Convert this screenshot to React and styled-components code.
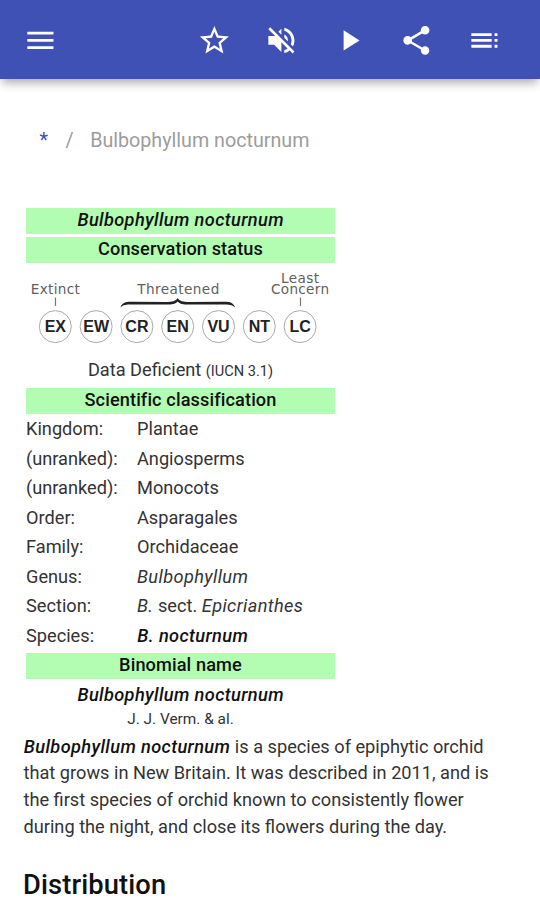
import React from "react"
import styled, { createGlobalStyle } from "styled-components"
import { MdMenu, MdStarBorder, MdVolumeOff, MdPlayArrow, MdShare, MdToc } from "react-icons/md"

const ranks = [
    { label: "Kingdom:", value: "Plantae" },
    { label: "(unranked):", value: "Angiosperms" },
    { label: "(unranked):", value: "Monocots" },
    { label: "Order:", value: "Asparagales" },
    { label: "Family:", value: "Orchidaceae" },
    { label: "Genus:", value: <i>Bulbophyllum</i> },
    { label: "Section:", value: <><i>B.</i> sect. <i>Epicrianthes</i></> },
]

const statuses = ["EX", "EW", "CR", "EN", "VU", "NT", "LC"]

const StatusChart = () => (
    <Chart viewBox="26 267 309 88">
        <ChartLabel x="55.3" y="293.6" textLength="49">Extinct</ChartLabel>
        <ChartLabel x="178.3" y="293.6" textLength="82">Threatened</ChartLabel>
        <ChartLabel x="300" y="283.2" textLength="38">Least</ChartLabel>
        <ChartLabel x="300" y="293.6" textLength="58">Concern</ChartLabel>
        <path d="M55.5 297.5v8.5M300.5 297.5v8.5" stroke="#777" strokeWidth="1.2" />
        <path
            d="M120.5 307.4C122 302.6 126 301.6 132 301.8L166 302C172 302 176 301 177.7 298C179.5 301 183 302 189 302L223 301.8C230 301.6 233.5 302.6 235 307.4C232 304.8 229 304.6 223 304.6L189 304.6C183 304.6 179.5 303.6 177.7 301.4C176 303.6 172 304.6 166 304.6L132 304.6C126 304.6 123.5 304.8 120.5 307.4Z"
            fill="#222"
        />
        {statuses.map((code, i) => (
            <g key={code}>
                <circle cx={55.3 + i * 40.8} cy="326.6" r="16" fill="#fff" stroke="#aaa" strokeWidth="1" />
                <Code x={55.3 + i * 40.8} y="332.3">{code}</Code>
            </g>
        ))}
    </Chart>
)

const App = () => {
    return (
        <Page>
            <GlobalStyle />
            <Toolbar>
                <IconButton aria-label="Menu"><MdMenu /></IconButton>
                <Actions>
                    <IconButton aria-label="Bookmark"><MdStarBorder /></IconButton>
                    <IconButton aria-label="Mute"><MdVolumeOff /></IconButton>
                    <IconButton aria-label="Play"><MdPlayArrow /></IconButton>
                    <IconButton aria-label="Share"><MdShare /></IconButton>
                    <IconButton aria-label="Contents"><MdToc /></IconButton>
                </Actions>
            </Toolbar>
            <Breadcrumb>
                <Home href="#">*</Home>
                <span>/</span>
                <Current>Bulbophyllum nocturnum</Current>
            </Breadcrumb>
            <Infobox>
                <Band><BoldItalic>Bulbophyllum nocturnum</BoldItalic></Band>
                <Band>Conservation status</Band>
                <Status>
                    <StatusChart />
                    <StatusText>Data Deficient <small>(IUCN 3.1)</small></StatusText>
                </Status>
                <Band>Scientific classification</Band>
                {ranks.map((rank, i) => (
                    <Rank key={i}>
                        <span>{rank.label}</span>
                        <span>{rank.value}</span>
                    </Rank>
                ))}
                <Rank>
                    <span>Species:</span>
                    <BoldItalic>B. nocturnum</BoldItalic>
                </Rank>
                <Band>Binomial name</Band>
                <Binomial>
                    <BoldItalic>Bulbophyllum nocturnum</BoldItalic>
                    <Authority>J. J. Verm. &amp; al.</Authority>
                </Binomial>
            </Infobox>
            <Copy>
                <BoldItalic>Bulbophyllum nocturnum</BoldItalic> is a species of epiphytic orchid<br />
                that grows in New Britain. It was described in 2011, and is<br />
                the first species of orchid known to consistently flower<br />
                during the night, and close its flowers during the day.
            </Copy>
            <Heading>Distribution</Heading>
        </Page>
    )
}

const GlobalStyle = createGlobalStyle`
    * {
      box-sizing: border-box;
    }
    body {
      margin: 0;
      background: #fff;
      overflow: hidden;
    }
`

const Page = styled.div`
    height: 900px;
    overflow: hidden;
    font-family: Roboto, sans-serif;
    font-size: 18.2px;
    color: #333;
`

const Toolbar = styled.header`
    display: flex;
    justify-content: space-between;
    align-items: center;
    height: 79px;
    padding: 1px 38.5px 0 22.5px;
    background: #3f51b5;
    box-shadow: 0 6px 9px -2px rgba(0, 0, 0, 0.32);
`

const Actions = styled.div`
    display: flex;
    gap: 32.7px;
`

const IconButton = styled.button`
    display: flex;
    padding: 0;
    border: 0;
    background: none;
    color: #fff;
    font-size: 34.8px;
`

const Breadcrumb = styled.nav`
    display: flex;
    height: 24px;
    margin: 50px 0 0 39.5px;
    font-size: 19.7px;
    line-height: 24px;
    color: #9c9c9c;
`

const Home = styled.a`
    width: 26px;
    color: #3f51b5;
    text-decoration: none;
`

const Current = styled.span`
    margin-left: 16.5px;
`

const Infobox = styled.section`
    display: flex;
    flex-direction: column;
    gap: 3.5px;
    width: 309px;
    margin: 54.8px 0 0 26px;
    line-height: 23.5px;
    i {
      letter-spacing: 0.38px;
    }
`

const Band = styled.div`
    height: 26px;
    background: #b3fdb3;
    color: #111;
    font-weight: 500;
    letter-spacing: 0.1px;
    text-align: center;
`

const BoldItalic = styled.b`
    padding-left: 0.3px;
    font-weight: 500;
    font-style: italic;
    letter-spacing: 0.37px;
    color: #111;
`

const Status = styled.div`
    height: 117.5px;
`

const Chart = styled.svg`
    display: block;
    width: 309px;
    height: 88px;
`

const ChartLabel = styled.text`
    font-family: "DejaVu Sans", sans-serif;
    font-size: 13.6px;
    text-anchor: middle;
    fill: #606060;
`

const Code = styled.text`
    font-family: "Liberation Sans", Arial, sans-serif;
    font-size: 16px;
    font-weight: 700;
    text-anchor: middle;
    fill: #222;
`

const StatusText = styled.div`
    margin-top: 3px;
    text-align: center;
    small {
      font-size: 14.6px;
    }
`

const Rank = styled.div`
    display: grid;
    grid-template-columns: 111px 1fr;
    height: 26px;
`

const Binomial = styled.div`
    display: flex;
    flex-direction: column;
    height: 47px;
    text-align: center;
`

const Authority = styled.span`
    margin-top: 1.8px;
    font-size: 15.4px;
`

const Copy = styled.p`
    margin: 3.9px 0 0 23.5px;
    font-size: 18.22px;
    line-height: 26.8px;
    white-space: nowrap;
`

const Heading = styled.h2`
    margin: 27px 0 0 23px;
    font-size: 27.3px;
    font-weight: 500;
    line-height: 34px;
    letter-spacing: 0.12px;
    color: #111;
`

export default App
